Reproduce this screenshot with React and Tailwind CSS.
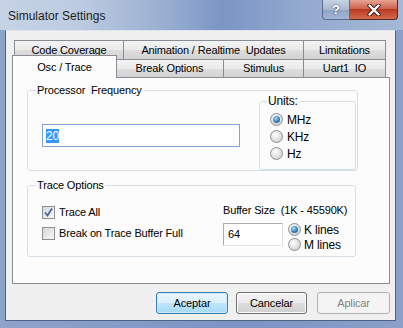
import React from 'react';

const Radio = ({ checked }) => (
  <span className="w-[13px] h-[13px] rounded-full border border-[#8f8f8f] bg-[radial-gradient(circle_at_40%_35%,#ffffff,#dadada_65%,#c6c6c6)] flex items-center justify-center shrink-0">
    {checked && (
      <span className="w-[7px] h-[7px] rounded-full bg-[radial-gradient(circle_at_40%_35%,#a6dbf8,#2b78b8_60%,#154f88)]" />
    )}
  </span>
);

const Check = ({ checked }) => (
  <span className="w-[13px] h-[13px] border border-[#8e8f8f] bg-[linear-gradient(135deg,#d6d6d6,#f9f9f9)] flex items-center justify-center shrink-0">
    {checked && (
      <svg width="11" height="11" viewBox="0 0 11 11">
        <path d="M2 5.5 L4.5 8.5 L9 1.5" stroke="#4d62a6" strokeWidth="1.8" fill="none" />
      </svg>
    )}
  </span>
);

const Tab = ({ className, children }) => (
  <div
    className={`border border-b-0 border-[#898c95] bg-[linear-gradient(#f3f3f3,#ebebeb_50%,#dedede_51%,#d3d3d3)] flex items-center justify-center shrink-0 ${className}`}
  >
    {children}
  </div>
);

const Group = ({ label, className, children }) => (
  <div className={`relative border border-[#d5dfe5] rounded-[3px] ${className}`}>
    <span className="absolute -top-[8px] left-[8px] bg-[#fcfcfc] px-[1px] leading-[14px]">{label}</span>
    {children}
  </div>
);

export default function App() {
  return (
    <div className="w-[403px] h-[328px] flex flex-col bg-[linear-gradient(90deg,#8ea3ca,#8199c6_40%,#7b94c4_60%,#8aa0c9)] font-['Liberation_Sans',Arial,sans-serif] text-[11px] tracking-[-0.15px] text-black">
      {/* title bar */}
      <div className="h-[30px] flex items-start bg-[linear-gradient(90deg,#c6d3e5_0%,#bccbe1_20%,#97acd0_42%,#7b96c5_55%,#93a9cf_75%,#a6b8d6_100%)]">
        <span className="pl-[8px] pt-[9px] text-[12px] leading-[15px] tracking-normal text-[#1c1c1c]">Simulator Settings</span>
        <div className="ml-auto mr-[5px] flex">
          <div className="w-[28px] h-[20px] rounded-bl-[4px] border border-t-0 border-[#5a6c8c] bg-[linear-gradient(#c7d3e4,#aab9d2_50%,#8ea2c4_51%,#a4b7d6)] flex items-center justify-center text-white text-[13px] font-bold leading-none [text-shadow:0_0_2px_#203050]">
            ?
          </div>
          <div className="w-[48px] h-[20px] rounded-br-[4px] border border-t-0 border-l-0 border-[#5a2a24] bg-[linear-gradient(#e8a293,#d0644e_45%,#b93a22_50%,#d36a4a)] flex items-center justify-center">
            <svg width="14" height="12" viewBox="0 0 14 12">
              <path d="M2.5 1.5 L11.5 10.5 M11.5 1.5 L2.5 10.5" stroke="#3a1a16" strokeWidth="4.2" strokeLinecap="round" />
              <path d="M2.5 1.5 L11.5 10.5 M11.5 1.5 L2.5 10.5" stroke="#ffffff" strokeWidth="2.4" strokeLinecap="round" />
            </svg>
          </div>
        </div>
      </div>

      <div className="flex pl-[5px]">
        {/* client area */}
        <div className="w-[391px] h-[291px] bg-[#f0f0f0] border border-[#4e6286] border-t-[#dfe5ee]">
          {/* tabs row 1 */}
          <div className="flex ml-[8px] mt-[9px] h-[19px]">
            <Tab className="w-[110px] h-[19px]">Code Coverage</Tab>
            <Tab className="w-[181px] h-[19px] -ml-px">Animation / Realtime&nbsp; Updates</Tab>
            <Tab className="w-[83px] h-[19px] -ml-px">Limitations</Tab>
          </div>
          {/* tabs row 2 */}
          <div className="flex items-end ml-[8px] -mt-[4px] h-[22px]">
            <div className="relative z-10 -ml-[2px] -mb-px w-[105px] h-[23px] border border-b-0 border-[#898c95] bg-[#fcfcfc] flex items-start justify-center pt-[3px] shrink-0">
              Osc / Trace
            </div>
            <Tab className="w-[109px] h-[18px] -ml-[2px]">Break Options</Tab>
            <Tab className="w-[81px] h-[18px] -ml-px">Stimulus</Tab>
            <Tab className="w-[83px] h-[18px] -ml-px">Uart1&nbsp; IO</Tab>
          </div>

          {/* tab panel */}
          <div className="ml-[6px] w-[378px] h-[207px] border border-[#898c95] bg-[#fcfcfc]">
            <Group label={'Processor\u00a0 Frequency'} className="ml-[14px] mt-[12px] w-[331px] h-[81px] flex items-start">
              <div className="ml-[14px] mt-[33px] w-[198px] h-[23px] border border-[#7fa6d6] bg-white flex items-center pl-[3px]">
                <span className="bg-[#3399ff] text-white leading-[14px] text-[12px]">20</span>
              </div>
              <div className="relative ml-[19px] mt-[10px] w-[97px] h-[69px] border border-[#d5dfe5] rounded-[3px]">
                <span className="absolute -top-[8px] left-[7px] bg-[#fcfcfc] px-[1px] leading-[14px] text-[12px]">Units:</span>
                <div className="mt-[9px] ml-[10px] flex flex-col text-[12px]">
                  <div className="h-[17px] flex items-center gap-[4px]"><Radio checked />MHz</div>
                  <div className="h-[17px] flex items-center gap-[4px]"><Radio />KHz</div>
                  <div className="h-[17px] flex items-center gap-[4px]"><Radio />Hz</div>
                </div>
              </div>
            </Group>

            <Group label="Trace Options" className="ml-[14px] mt-[14px] w-[329px] h-[72px] flex items-start">
              <div className="w-[195px] pl-[14px] mt-[16px] flex flex-col">
                <div className="h-[21px] flex items-center gap-[4px]"><Check checked />Trace All</div>
                <div className="h-[21px] flex items-center gap-[4px]"><Check />Break on Trace Buffer Full</div>
              </div>
              <div className="mt-[17px] flex flex-col">
                <span className="leading-[14px]">Buffer Size&nbsp; (1K - 45590K)</span>
                <div className="flex items-start mt-[5px]">
                  <div className="mt-[1px] w-[60px] h-[23px] border border-[#abadb3] border-r-[#dbdfe6] border-b-[#e3e9ef] bg-white flex items-center pl-[4px]">
                    64
                  </div>
                  <div className="ml-[5px] flex flex-col text-[12px]">
                    <div className="h-[15px] flex items-center gap-[3px]"><Radio checked />K lines</div>
                    <div className="h-[15px] flex items-center gap-[3px]"><Radio />M lines</div>
                  </div>
                </div>
              </div>
            </Group>
          </div>

          {/* buttons */}
          <div className="flex mt-[8px] ml-[150px] text-[11px]">
            <button className="w-[72px] h-[22px] rounded-[3px] border border-[#3c7fb1] bg-[linear-gradient(#eaf6fd,#d9f0fc_50%,#bee6fd_51%,#a7d9f5)] shadow-[inset_0_0_0_1px_#c8e8fb]">
              Aceptar
            </button>
            <button className="ml-[8px] w-[71px] h-[22px] rounded-[3px] border border-[#707070] bg-[linear-gradient(#f2f2f2,#ebebeb_50%,#dddddd_51%,#cfcfcf)] shadow-[inset_0_0_0_1px_#fcfcfc]">
              Cancelar
            </button>
            <button className="ml-[10px] w-[73px] h-[22px] rounded-[3px] border border-[#adb2b5] bg-[#f4f4f4] text-[#838383]">
              Aplicar
            </button>
          </div>
        </div>
      </div>
    </div>
  );
}
